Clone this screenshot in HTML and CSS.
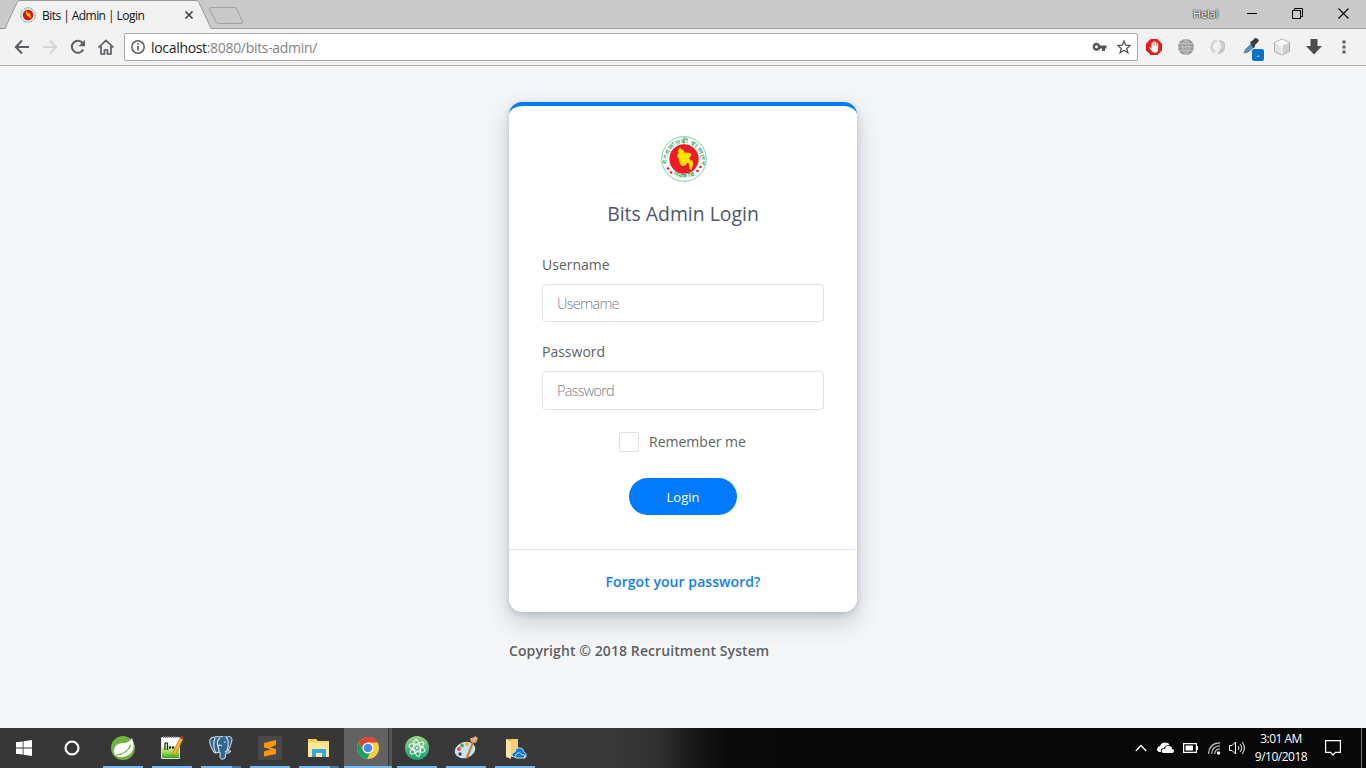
FILE: index.html
```html
<!DOCTYPE html>
<html lang="en">
<head>
<meta charset="utf-8">
<title>Bits | Admin | Login</title>
<link rel="stylesheet" href="styles.css">
</head>
<body>
<header class="tabs">
  <svg class="tabshape" width="250" height="29"><path d="M0 28.500H5L17 2.500Q18 .5 20 .5H196Q198 .5 199 2.500L211 28.500" fill="#f2f2f2" stroke="#999"/><path d="M6 28.500H210.500" stroke="#f2f2f2" stroke-width="2"/><path d="M212 7.500H234Q236 7.500 237 9L242.500 22Q243 23.500 241.500 23.500H219Q217 23.500 216 22L209.500 9Q209 7.500 212 7.500Z" fill="#c9c9c9" stroke="#a2a2a2"/></svg>
  <div class="tab">
    <svg width="16" height="16" viewBox="0 0 16 16"><circle cx="8" cy="8" r="7.300" fill="#dce9df" stroke="#6f9f83" stroke-dasharray="1.500 1"/><circle cx="8" cy="8" r="5.200" fill="#e50d14"/><path d="M5.500 4.500h1.500l.5 1.500 2.500.5 1 4-1 .5-1-1.500-2-.5z" fill="#ffd900"/></svg>
    <span class="tabname">Bits | Admin | Login</span>
    <svg class="tabclose" width="10" height="10"><path d="M1.500 1.500l7 7M8.500 1.500l-7 7" stroke="#444" stroke-width="1.700"/></svg>
  </div>
  <div class="window">
    <span class="person">Helal</span>
    <svg width="10" height="11"><path d="M0 5.500h10" stroke="#000"/></svg>
    <svg width="11" height="11"><path d="M.5 2.500h8v8h-8zM2.500 2.500v-2h8v8h-2" fill="none" stroke="#000"/></svg>
    <svg width="11" height="11"><path d="M.5.5l10 10M10.500.5l-10 10" stroke="#000" stroke-width="1.100"/></svg>
  </div>
</header>

<nav class="toolbar">
  <svg width="16" height="16"><path d="M15 8H2M8 1.500L1.800 8 8 14.500" fill="none" stroke="#5a5d62" stroke-width="2"/></svg>
  <svg width="16" height="16"><path d="M1 8H14M8 1.500L14.200 8 8 14.500" fill="none" stroke="#d5d6d8" stroke-width="2"/></svg>
  <svg width="16" height="16"><path d="M13.200 10.500A6 6 0 1 1 12.500 4" fill="none" stroke="#5a5d62" stroke-width="2"/><path d="M15 1v6.300H8.500z" fill="#5a5d62"/></svg>
  <svg class="home" width="18" height="16"><path d="M1.500 8.500L9 1.500l7.500 7M4 7v8h3.500v-4h3v4H14V7" fill="none" stroke="#5a5d62" stroke-width="1.700"/></svg>
  <div class="omnibox">
    <svg width="14" height="14"><circle cx="7" cy="7" r="6.200" fill="none" stroke="#5a5d62" stroke-width="1.500"/><path d="M7 6v4.500M7 3.200v1.600" stroke="#5a5d62" stroke-width="1.700"/></svg>
    <span class="url"><b>localhost</b>:8080/bits-admin/</span>
    <svg class="key" width="15" height="10"><path fill-rule="evenodd" d="M4.500.8a4 4 0 0 1 3.800 2.700H14.500v3H13v2.500h-3V6.500H8.300A4 4 0 1 1 4.500.8zm0 2.500a1.500 1.500 0 1 0 0 3 1.500 1.500 0 0 0 0-3z" fill="#555"/></svg>
    <svg width="14" height="14" viewBox="0 0 14 14"><path d="M7 1l1.700 4.200 4.500.3-3.500 2.900 1.200 4.400L7 10.300l-3.900 2.500 1.200-4.400L.8 5.500l4.500-.3z" fill="none" stroke="#555" stroke-width="1.300"/></svg>
  </div>
  <div class="extensions">
    <svg width="16" height="16"><path d="M4.700 0h6.600L16 4.700v6.600L11.300 16H4.700L0 11.300V4.700z" fill="#e41b1b"/><path d="M3 8.500l1.200-.3 1.300 1.300V4q.8-1 1.400 0v3h.4V2.500q.8-1 1.400 0V7h.4V3q.7-.8 1.300 0v4.500h.4V4.500q.9-.8 1.400 0V10q0 3.500-3.200 3.800-2.200 0-3.500-2z" fill="#fff"/></svg>
    <svg width="16" height="16"><circle cx="8" cy="8" r="8" fill="#9b9b9b"/><path d="M0 8h16M1 4.500h14M1 11.500h14M8 0v16M8 0Q1 8 8 16M8 0Q15 8 8 16" fill="none" stroke="#c2c2c2"/></svg>
    <svg width="16" height="16"><path d="M7 1.500A6.500 6.500 0 0 0 5 13.500" fill="none" stroke="#d6d6d6" stroke-width="3"/><path d="M9 1.500Q15 2 14.500 8 14 13.500 8 14.500 12.500 11 11 6" fill="#d0d0d0" stroke="#c4c4c4" stroke-width="1.500"/><path d="M10 4L6 9h3l-1 4 4-6H9z" fill="#eee"/></svg>
    <span class="picker">
      <svg width="18" height="18"><path d="M2 15L4 11 10 5l3 3-7 6z" fill="#4b97d3" stroke="#777"/><path d="M8 4l2-1 3-3q3 0 4 3l-4 4v2l-2 1z" fill="#393e43"/></svg>
      <span class="pickbadge">.</span>
    </span>
    <svg width="16" height="18"><path d="M8 1l7.500 3.500v9L8 17 .5 13.500v-9z" fill="#e4e4e4" stroke="#aaa"/><path d="M1 4.700L8 8l7-3.300L8 1.500z" fill="#f8f8f8"/><path d="M8 8v8.500l7-3.200V4.700z" fill="#cfcfcf"/><path d="M1 4.700L8 8v8.500" fill="none" stroke="#fff"/></svg>
    <svg width="16" height="16"><path d="M4.500 0h7v7H16l-8 8.500L0 7h4.500z" fill="#4d4d4d"/></svg>
    <svg width="4" height="14"><path d="M.5.5h3v3h-3zM.5 5.500h3v3h-3zM.5 10.500h3v3h-3z" fill="#5a5d62"/></svg>
  </div>
</nav>

<main class="page">
  <form class="card">
    <div class="cardbody">
      <svg class="seal" width="46" height="46" viewBox="0 0 46 46">
        <circle cx="23" cy="23" r="22.300" fill="#fff" stroke="#62bf8b" stroke-width=".8"/>
        <circle cx="23" cy="23" r="14.700" fill="#ed1c24"/>
        <path d="M17 14l2-2.500 1.500 2 2 .5.500 2.500 6.500.5 1 2-2.500 3.500 1.500 2 2 0 .5 4-1.500 5.500-2-1-.5-5-2-1.500-1.500 3-3.500.5-2-2-1-5-2-3 1.500-3z" fill="#ffe600"/>
        <g fill="#ed1c24"><circle cx="7" cy="32.500" r="1.300"/><circle cx="10" cy="36.500" r="1.300"/><circle cx="39.500" cy="31" r="1.300"/><circle cx="36.500" cy="35" r="1.300"/></g>
        <path id="ringTop" d="M6.700 29A17 17 0 1 1 39.300 29" fill="none"/>
        <path id="ringBottom" d="M7 34A20.400 20.400 0 0 0 39 34" fill="none"/>
        <g class="sealtext"><text><textPath href="#ringTop" startOffset="1.500" textLength="61" lengthAdjust="spacingAndGlyphs">গণপ্রজাতন্ত্রী বাংলাদেশ</textPath></text><text><textPath href="#ringBottom" startOffset="7" textLength="22" lengthAdjust="spacingAndGlyphs">সরকার</textPath></text></g>
      </svg>
      <h1 class="title">Bits Admin Login</h1>
      <label class="label" for="user">Username</label>
      <input class="field" id="user" type="text" placeholder="Username">
      <label class="label second" for="pass">Password</label>
      <input class="field tall" id="pass" type="password" placeholder="Password">
      <label class="remember"><span class="box"></span><span>Remember me</span></label>
      <button class="login" type="button">Login</button>
    </div>
    <div class="cardfoot"><a class="forgot">Forgot your password?</a></div>
  </form>
  <p class="copyright">Copyright © 2018 Recruitment System</p>
</main>

<footer class="taskbar">
  <div class="sys"><svg width="16" height="16"><path d="M0 2.300L6.700 1.400v6.200H0zM7.500 1.200L16 0v7.600H7.500zM0 8.400h6.700v6.200L0 13.700zM7.500 8.400H16V16l-8.500-1.200z" fill="#fff"/></svg></div>
  <div class="sys"><svg width="16" height="16"><circle cx="8" cy="8" r="6.500" fill="none" stroke="#fff" stroke-width="2.200"/></svg></div>
  <div class="apps">
    <div class="app"><svg width="24" height="24"><circle cx="12" cy="12" r="12" fill="#6db33f"/><path d="M21 2Q25 13 19 18 13 23 5 20 1 17 4 11q2-4 9-4 5 0 8-5z" fill="#fff"/><path d="M5 19Q16 18 20 9" fill="none" stroke="#6db33f" stroke-width="1.200"/></svg></div>
    <div class="app"><svg width="24" height="24"><defs><linearGradient id="notes" x2="0" y2="1"><stop offset=".3" stop-color="#fff"/><stop offset=".7" stop-color="#a5dc4a"/><stop offset="1" stop-color="#279d20"/></linearGradient></defs><path d="M1.500 1.500h18v21h-18z" fill="url(#notes)" stroke="#ddd"/><path d="M3 1h16" stroke="#777" stroke-width="2" stroke-dasharray="1 1"/><path d="M5 14V7h2.500v7M9 11.500h2M12 11.500h2M10 10v3M13 10v3" fill="none" stroke="#222" stroke-width="1.200"/><path d="M20 2l3 1-7 15-3 2v-4z" fill="#f5b52d" stroke="#a76b19" stroke-width=".6"/><path d="M20 2l1-2 2.500 1-.5 2z" fill="#d8313d"/></svg></div>
    <div class="app more"><svg width="24" height="24"><path d="M6 1q3-1 5 0 4-2 7-1 5 0 5 4-1 6-4 11l3 0q-1 3-5 2l-1 5q-4 3-5-1v-5l-4 1q-2 1-4-4Q-1 5 2 2q2-1 4-1z" fill="#336791" stroke="#d9e5ee"/><path d="M6 2Q3 11 7 17M11 2q-4 3-2 8 1 3 1 6M17 1q4 4 1 14l-2 1M9 10q2-2 4 0M15 6h2" fill="none" stroke="#dce7ef" stroke-width="1.100"/></svg></div>
    <div class="app"><svg width="24" height="24"><rect width="24" height="24" rx="2" fill="#484848"/><path d="M6 7l12-3v5l-6 2.500 6 1.500v5L6 20.500v-5l7-2.200L6 11.500z" fill="#ff9800"/></svg></div>
    <div class="app more"><svg width="24" height="24"><path d="M1 3h8l2 2h11v16H1z" fill="#ffd766"/><path d="M1 7h21v14H1z" fill="#ffe69a"/><path d="M3 4h4" stroke="#f5a623"/><path d="M5 21v-8h14v8h-4v-4H9v4z" fill="#32a9e0"/></svg></div>
    <div class="app active"><svg width="24" height="24"><circle cx="12" cy="12" r="11" fill="#f8cb45"/><path d="M12 1A11 11 0 0 1 21.500 6.500H12A5.500 5.500 0 0 0 7 14L2.500 6.500A11 11 0 0 1 12 1z" fill="#dc4437"/><path d="M2.500 6.500L7.500 15q2 3 6.500 2l-3 6A11 11 0 0 1 2.500 6.500z" fill="#17a05e"/><circle cx="12" cy="12" r="5.600" fill="#fff"/><circle cx="12" cy="12" r="4.300" fill="#4b87f4"/></svg></div>
    <div class="app"><svg width="24" height="24"><defs><linearGradient id="green" x2="0" y2="1"><stop stop-color="#9ad48c"/><stop offset="1" stop-color="#139f6b"/></linearGradient></defs><circle cx="12" cy="12" r="12" fill="url(#green)"/><g fill="none" stroke="#fff"><ellipse cx="12" cy="12" rx="8.500" ry="3.200" transform="rotate(20 12 12)"/><ellipse cx="12" cy="12" rx="8.500" ry="3.200" transform="rotate(80 12 12)"/><ellipse cx="12" cy="12" rx="8.500" ry="3.200" transform="rotate(140 12 12)"/></g><circle cx="12" cy="12" r="1.200" fill="#fff"/></svg></div>
    <div class="app"><svg width="24" height="24"><ellipse cx="11" cy="14" rx="10.500" ry="8" fill="#c8e2f3" transform="rotate(-20 11 14)"/><circle cx="6" cy="18" r="1.700" fill="#444"/><circle cx="5" cy="13" r="2" fill="#e54c37"/><circle cx="8" cy="9.500" r="1.900" fill="#44b44b"/><circle cx="13" cy="8" r="2" fill="#f4b72c"/><path d="M19 4l1.500 1L14 22q-2 2-2-1z" fill="#c87a2d"/><path d="M16 2q4 0 5-2l3 2-2 5q-3-1-5-1z" fill="#d9ae79"/></svg></div>
    <div class="app"><svg width="24" height="24"><path d="M3 3h12v18H3z" fill="#e7ae45"/><path d="M3 3l5 3v17l-5-2z" fill="#ffe3a0"/><path d="M8 6V3h7v15H8z" fill="#f4cd75"/><path d="M11 21q-3 0-2-3 1-2 3-2 1-5 5-4 3 0 4 4 3 1 2 5z" fill="#0879d8" stroke="#e6f4ff" stroke-width=".8"/><path d="M13 22q-2-1 0-3 2-4 5-1 4 0 4 4z" fill="#0879d8" stroke="#fff" stroke-width=".8"/></svg></div>
  </div>
  <div class="tray">
    <svg width="12" height="8"><path d="M.8 7L6 1.500 11.200 7" fill="none" stroke="#fff" stroke-width="1.300"/></svg>
    <svg width="17" height="12"><path d="M2 10q-3-1-1.500-4Q1 4 3 4q2-5 7-3 2 0 2.500 2Q8 3 7 6 3 6 4 10zM6 11q-2-1-1-3t3-1q1-4 4-3 3 0 3 3 2 0 2 2t-2 2z" fill="#fff"/></svg>
    <svg width="15" height="10"><path d="M.6.6h12.800v8.800H.6z" fill="none" stroke="#fff" stroke-width="1.200"/><path d="M2.500 2.500H10v5H2.500zM14 3h1v4h-1z" fill="#fff"/></svg>
    <svg width="13" height="13"><g fill="none" stroke="#bbb" stroke-width="1.200"><path d="M.6 12Q1 1 12 .8"/><path d="M3.600 12Q4 4 12 3.800M6.600 12Q7 7 12 6.800"/></g><circle cx="10.500" cy="11" r="1.700" fill="#fff"/></svg>
    <svg width="17" height="14"><path d="M.5 4.500H3l3.500-3.500v12L3 9.500H.5z" fill="none" stroke="#fff"/><path d="M9 5q1.500 2 0 4M11 3q3.500 4 0 8M13 1q5 6 0 12" fill="none" stroke="#ddd" stroke-width="1.100"/></svg>
    <div class="clock"><div>3:01 AM</div><div>9/10/2018</div></div>
    <svg class="notice" width="16" height="16"><path d="M.6.6h14.800v11.800h-5L8 15l-2.400-2.600h-5z" fill="none" stroke="#fff" stroke-width="1.200"/></svg>
  </div>
</footer>
</body>
</html>
```
FILE: styles.css
```css
* { box-sizing: border-box; }
body {
  margin: 0;
  width: 1366px;
  height: 768px;
  overflow: hidden;
  display: flex;
  flex-direction: column;
  font-family: "Open Sans", "Noto Sans", sans-serif;
  background: #f4f6f8;
}
svg { display: block; flex: none; }

.tabs {
  position: relative;
  height: 29px;
  flex: none;
  display: flex;
  justify-content: space-between;
  background: #cacaca;
  border-bottom: 1px solid #a0a0a0;
}
.tabshape { position: absolute; left: 0; top: 0; }
.tab {
  position: relative;
  display: flex;
  align-items: center;
  width: 194px;
  padding: 2px 0 0 20px;
  font-size: 12px;
  color: #111;
}
.tabname { margin-left: 6px; white-space: nowrap; letter-spacing: -.55px; }
.tabclose { margin-left: auto; }
.window { display: flex; align-items: center; padding: 0 17px 2px 0; }
.window svg { margin-left: 35px; }
.window .person + svg { margin-left: 29px; }
.person {
  font-size: 11px;
  letter-spacing: -.2px;
  color: #fff;
  text-shadow: 0 0 1px #222, 0 0 2px #222, 0 0 2px #333;
}

.toolbar {
  height: 37px;
  flex: none;
  display: flex;
  align-items: center;
  gap: 12px;
  padding-left: 14px;
  background: #f2f2f2;
  border-bottom: 1px solid #b5b5b7;
}
.home { margin-left: -1px; }
.omnibox {
  display: flex;
  align-items: center;
  width: 1014px;
  height: 28px;
  margin-left: -3px;
  padding: 0 6px;
  background: #fff;
  border: 1px solid #a8a8a8;
  border-radius: 2px;
}
.url { margin-left: 6px; font-size: 14px; letter-spacing: -.32px; color: #828282; }
.url b { font-weight: 400; color: #222; }
.key { margin: 0 10px 0 auto; }
.extensions { display: flex; align-items: center; gap: 16px; margin-left: -4px; }
.picker { position: relative; width: 18px; height: 18px; margin-right: -2px; }
.pickbadge {
  position: absolute;
  left: 10px;
  top: 11px;
  width: 12px;
  height: 12px;
  border-radius: 2px;
  background: #0b72c5;
  color: #fff;
  font-size: 11px;
  line-height: 8px;
  text-align: center;
}
.extensions svg:last-child { margin-left: 4px; }

.page {
  flex: 1;
  display: flex;
  flex-direction: column;
  align-items: center;
  padding-top: 36px;
  color: #5b5f66;
}
.card {
  width: 348px;
  height: 510px;
  display: flex;
  flex-direction: column;
  background: #fff;
  border-top: 4px solid #007bff;
  border-radius: 13px;
  box-shadow: 0 10px 24px rgba(60, 70, 85, .24), 0 2px 6px rgba(60, 70, 85, .2);
}
.cardbody {
  flex: 1;
  display: flex;
  flex-direction: column;
  align-items: center;
  padding: 30px 33px 0;
}
.seal { margin-left: 1px; }
.sealtext { font-size: 5.500px; font-weight: 700; fill: #1fa35c; }
.title {
  margin: 18px 0 0;
  font-size: 19.400px;
  line-height: 28px;
  font-weight: 400;
  color: #4c566c;
}
.label {
  align-self: flex-start;
  margin-top: 27px;
  font-size: 14px;
  line-height: 20px;
}
.label.second { margin-top: 20px; }
.field {
  width: 282px;
  height: 38px;
  margin-top: 9px;
  padding: 0 14px;
  border: 1px solid #e2e3ea;
  border-radius: 4px;
  background: #fff;
  font: 300 14.500px "Open Sans", sans-serif;
  letter-spacing: -.75px;
}
.field.tall { height: 39px; }
.field::placeholder { color: #737b85; opacity: 1; }
.remember {
  display: flex;
  align-items: center;
  margin-top: 22px;
  height: 20px;
  font-size: 14px;
}
.box {
  width: 20px;
  height: 20px;
  margin-right: 10px;
  border: 1px solid #dfe0e8;
  border-radius: 2px;
}
.remember span + span { line-height: 18px; margin: -1px 1px 0 0; }
.login {
  width: 108px;
  height: 37px;
  margin-top: 26px;
  padding: 1px 0 0;
  border: 0;
  border-radius: 19px;
  background: #007bff;
  color: #fff;
  font: 400 13px "Open Sans", sans-serif;
}
.cardfoot {
  height: 63px;
  padding-top: 22px;
  border-top: 1px solid #e0e2e8;
  text-align: center;
}
.forgot { display: block; font-size: 14px; line-height: 20px; font-weight: 600; letter-spacing: .06px; color: #107df8; }
.copyright {
  width: 348px;
  margin: 29px 0 0;
  font-size: 14px;
  line-height: 20px;
  font-weight: 600;
  letter-spacing: .09px;
  white-space: nowrap;
}

.taskbar {
  height: 40px;
  flex: none;
  display: flex;
  background: linear-gradient(90deg, #363636 0, #393939 610px, #303030 660px, #191919 690px, #090909 730px, #080808 100%);
}
.sys { width: 48px; display: flex; align-items: center; justify-content: center; }
.apps { display: flex; margin-left: 3px; gap: 1px; }
.app {
  width: 48px;
  display: flex;
  align-items: center;
  justify-content: center;
  background: linear-gradient(#76b9ed, #76b9ed) 4px 38px / 40px 2px no-repeat;
}
.app.more { background: linear-gradient(90deg, #76b9ed 31px, #49769a 31px) 4px 38px / 40px 2px no-repeat; }
.app.active {
  background:
    linear-gradient(#76b9ed, #76b9ed) 0 38px / 48px 2px no-repeat,
    linear-gradient(90deg, #626262 44px, #363636 44px, #363636 45px, #555 45px);
}
.tray {
  flex: 1;
  display: flex;
  align-items: center;
  justify-content: flex-end;
  margin-right: 4px;
  padding-right: 20px;
  border-right: 1px solid #777;
}
.tray svg { margin-right: 9px; }
.tray svg:nth-child(1) { margin-right: 10px; }
.tray svg:nth-child(3) { margin-right: 10px; }
.tray svg:nth-child(4) { margin-right: 8px; }
.tray svg:nth-child(5) { margin-right: 0; }
.tray .notice { margin: 0; }
.tray .clock {
  width: 70px;
  margin-right: 9px;
  color: #fff;
  font-size: 12px;
  line-height: 18px;
  letter-spacing: -.5px;
  text-align: center;
}
```
